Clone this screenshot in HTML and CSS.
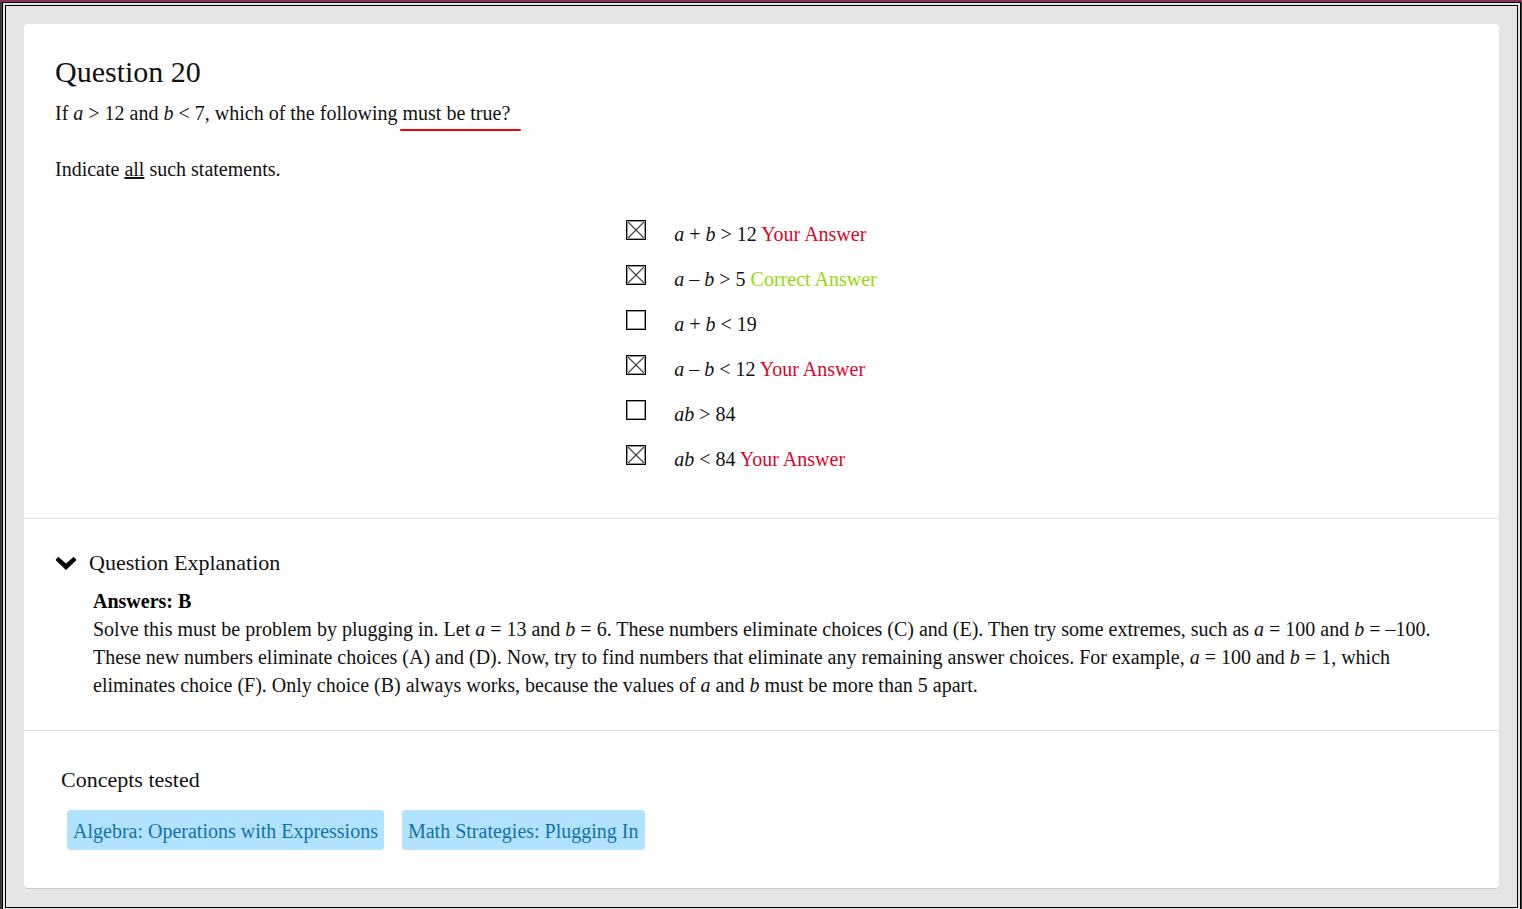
FILE: index.html
```html
<!DOCTYPE html>
<html lang="en">
<head>
<meta charset="utf-8">
<title>Question 20</title>
<link rel="stylesheet" href="styles.css">
</head>
<body>
<div class="frame">
  <main class="card">
    <section class="question">
      <h1 class="title">Question 20</h1>
      <p class="stem">If <i>a</i> &gt; 12 and <i>b</i> &lt; 7, which of the following <span class="marked">must be true?</span></p>
      <p class="stem instruction">Indicate <u>all</u> such statements.</p>
      <ul class="choices">
        <li><label class="choice"><input class="box" type="checkbox" checked><span><i>a</i> + <i>b</i> &gt; 12 <span class="wrong">Your Answer</span></span></label></li>
        <li><label class="choice"><input class="box" type="checkbox" checked><span><i>a</i> – <i>b</i> &gt; 5 <span class="right">Correct Answer</span></span></label></li>
        <li><label class="choice"><input class="box" type="checkbox"><span><i>a</i> + <i>b</i> &lt; 19</span></label></li>
        <li><label class="choice"><input class="box" type="checkbox" checked><span><i>a</i> – <i>b</i> &lt; 12 <span class="wrong">Your Answer</span></span></label></li>
        <li><label class="choice"><input class="box" type="checkbox"><span><i>ab</i> &gt; 84</span></label></li>
        <li><label class="choice"><input class="box" type="checkbox" checked><span><i>ab</i> &lt; 84 <span class="wrong">Your Answer</span></span></label></li>
      </ul>
    </section>
    <section class="explanation">
      <h2><button class="toggle" type="button" aria-expanded="true">
        <svg class="chevron" viewBox="0 0 22 14" aria-hidden="true"><path d="M3.300 0.800L11 7.600L18.700 0.800L21.200 3.400Q21.500 3.900 21 4.400L11 14L1 4.400Q0.500 3.900 0.800 3.400Z" fill="#000"/></svg>
        <span>Question Explanation</span>
      </button></h2>
      <div class="answer">
        <p><b>Answers: B</b></p>
        <p>Solve this must be problem by plugging in. Let <i>a</i> = 13 and <i>b</i> = 6. These numbers eliminate choices (C) and (E). Then try some extremes, such as <i>a</i> = 100 and <i>b</i> = –100. These new numbers eliminate choices (A) and (D). Now, try to find numbers that eliminate any remaining answer choices. For example, <i>a</i> = 100 and <i>b</i> = 1, which eliminates choice (F). Only choice (B) always works, because the values of <i>a</i> and <i>b</i> must be more than 5 apart.</p>
      </div>
    </section>
    <section class="concepts">
      <h2 class="subtitle">Concepts tested</h2>
      <div class="tags">
        <a class="tag" href="#algebra">Algebra: Operations with Expressions</a>
        <a class="tag" href="#strategies">Math Strategies: Plugging In</a>
      </div>
    </section>
  </main>
</div>
</body>
</html>
```
FILE: styles.css
```css
* { box-sizing: border-box; }
html { overflow: hidden; background: #3c3b3d; }
body {
  margin: 0;
  padding: 0 1px 0 2px;
  border-top: 2px solid #85305b;
  font: 20px/28px "Liberation Serif", "Times New Roman", serif;
  color: #111;
}
h1, h2, p, ul { margin: 0; padding: 0; font-weight: normal; }
.frame {
  border: 4px double #000;
  background: #e5e5e5;
  padding: 18px 18px 19px;
}
.card {
  background: #fff;
  border-radius: 4px;
  box-shadow: 0 1px 0 #ccc;
}
.question {
  padding: 32px 31px 37px;
  border-bottom: 1px solid #e3e3e3;
}
.title { font-size: 30px; line-height: 32px; margin-bottom: 11px; }
.instruction { margin-top: 28px; }
.marked {
  position: relative;
}
.marked::after {
  content: "";
  position: absolute;
  left: -3px;
  right: -11px;
  bottom: -7px;
  height: 2px;
  background: #f00;
  border-radius: 1px;
}
.choices {
  list-style: none;
  width: max-content;
  margin: 28px auto 0;
  padding-right: 20px;
}
.choice {
  display: flex;
  align-items: flex-start;
  gap: 28px;
  height: 45px;
  padding-top: 9px;
}
.box {
  appearance: none;
  width: 20px;
  height: 20px;
  margin: 0;
  border: 1px solid #000;
  box-shadow: inset 0 0 0 1px #999;
}
.box:checked {
  background:
    linear-gradient(45deg, transparent 46%, #444 49%, #444 51%, transparent 54%),
    linear-gradient(-45deg, transparent 46%, #444 49%, #444 51%, transparent 54%);
}
.wrong { color: #d6072a; }
.right { color: #98d80d; }
.explanation {
  padding: 30px 31px 31px;
  border-bottom: 1px solid #e3e3e3;
}
.toggle {
  display: flex;
  align-items: center;
  gap: 12px;
  padding: 0;
  border: 0;
  background: none;
  font: inherit;
  font-size: 22px;
  color: inherit;
}
.chevron { width: 22px; height: 14px; }
.answer { margin: 10px 0 0 38px; }
.answer b { color: #000; }
.concepts { padding: 35px 37px 38px; }
.subtitle { font-size: 22px; }
.tags {
  display: flex;
  flex-wrap: wrap;
  gap: 18px;
  margin: 16px 0 0 6px;
}
.tag {
  padding: 7px 6px 5px;
  border-radius: 4px;
  background: #b1e2ff;
  color: #1172a8;
  text-decoration: none;
}
```
